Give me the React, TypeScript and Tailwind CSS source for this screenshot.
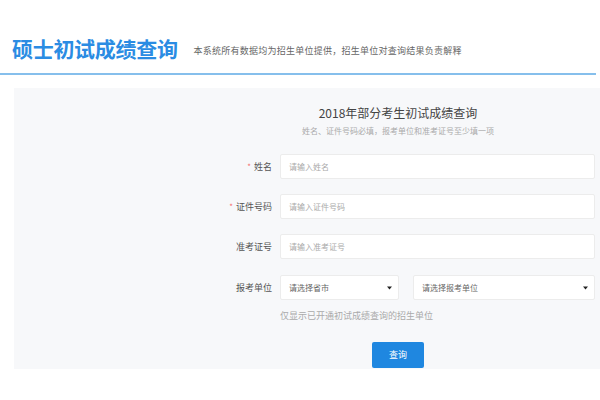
import React from "react";

const font = { fontFamily: '"Noto Sans CJK SC", "Noto Sans", sans-serif' };

function Label({ text, required }: { text: string; required?: boolean }) {
  return (
    <div className="w-[72px] flex justify-end items-center text-[9px] leading-[12px] text-[#555]">
      {required && <span className="text-[#f56c6c] mr-[3px] text-[8px]">*</span>}
      <span>{text}</span>
    </div>
  );
}

function Input({ placeholder }: { placeholder: string }) {
  return (
    <div className="w-[315px] h-[25px] bg-white border border-[#ececec] rounded-[2px] flex items-center pl-[8px] text-[8px] text-[#aaa]">
      {placeholder}
    </div>
  );
}

function Select({ text, w }: { text: string; w: string }) {
  return (
    <div className={`${w} h-[25px] bg-white border border-[#ececec] rounded-[2px] flex items-center justify-between pl-[8px] pr-[6px] text-[8px] text-[#666]`}>
      <span>{text}</span>
      <svg width="5" height="4" viewBox="0 0 5 4"><path d="M0 0.5 L5 0.5 L2.5 3.5 Z" fill="#222" /></svg>
    </div>
  );
}

export default function App() {
  return (
    <div className="w-[600px] h-[400px] bg-white overflow-hidden" style={font}>
      <div className="flex items-center pl-[12px] pt-[36px]">
        <div className="text-[21px] leading-[24px] font-bold text-[#2b8ce3] tracking-[-0.3px]">硕士初试成绩查询</div>
        <div className="ml-[16px] mt-[5px] text-[9px] leading-[12px] text-[#666] tracking-[0.25px]">本系统所有数据均为招生单位提供，招生单位对查询结果负责解释</div>
      </div>
      <div className="mt-[13px] w-[596px] h-[2px] bg-[#86bfec]" />
      <div className="ml-[14px] mt-[13px] w-[586px] h-[281px] bg-[#f7f8fa]">
        <div className="ml-[186px] w-[396px] flex flex-col items-center pt-[17px]">
          <div className="text-[12px] leading-[16px] text-[#444]">2018年部分考生初试成绩查询</div>
          <div className="mt-[5px] text-[8px] leading-[10px] text-[#aaa]">姓名、证件号码必填，报考单位和准考证号至少填一项</div>
          <div className="mt-[18px] w-full flex flex-col gap-[15px]">
            <div className="flex items-center gap-[8px]">
              <Label text="姓名" required />
              <Input placeholder="请输入姓名" />
            </div>
            <div className="flex items-center gap-[8px]">
              <Label text="证件号码" required />
              <Input placeholder="请输入证件号码" />
            </div>
            <div className="flex items-center gap-[8px]">
              <Label text="准考证号" />
              <Input placeholder="请输入准考证号" />
            </div>
            <div className="flex items-center gap-[8px] mt-[1px]">
              <Label text="报考单位" />
              <div className="flex gap-[14px]">
                <Select text="请选择省市" w="w-[119px]" />
                <Select text="请选择报考单位" w="w-[182px]" />
              </div>
            </div>
          </div>
          <div className="w-full pl-[80px] mt-[10px] text-[9px] leading-[12px] text-[#aaa]">仅显示已开通初试成绩查询的招生单位</div>
          <div className="mt-[20px] w-[52px] h-[26px] bg-[#1f87e0] rounded-[2px] flex items-center justify-center text-white text-[9px]">查询</div>
        </div>
      </div>
    </div>
  );
}
